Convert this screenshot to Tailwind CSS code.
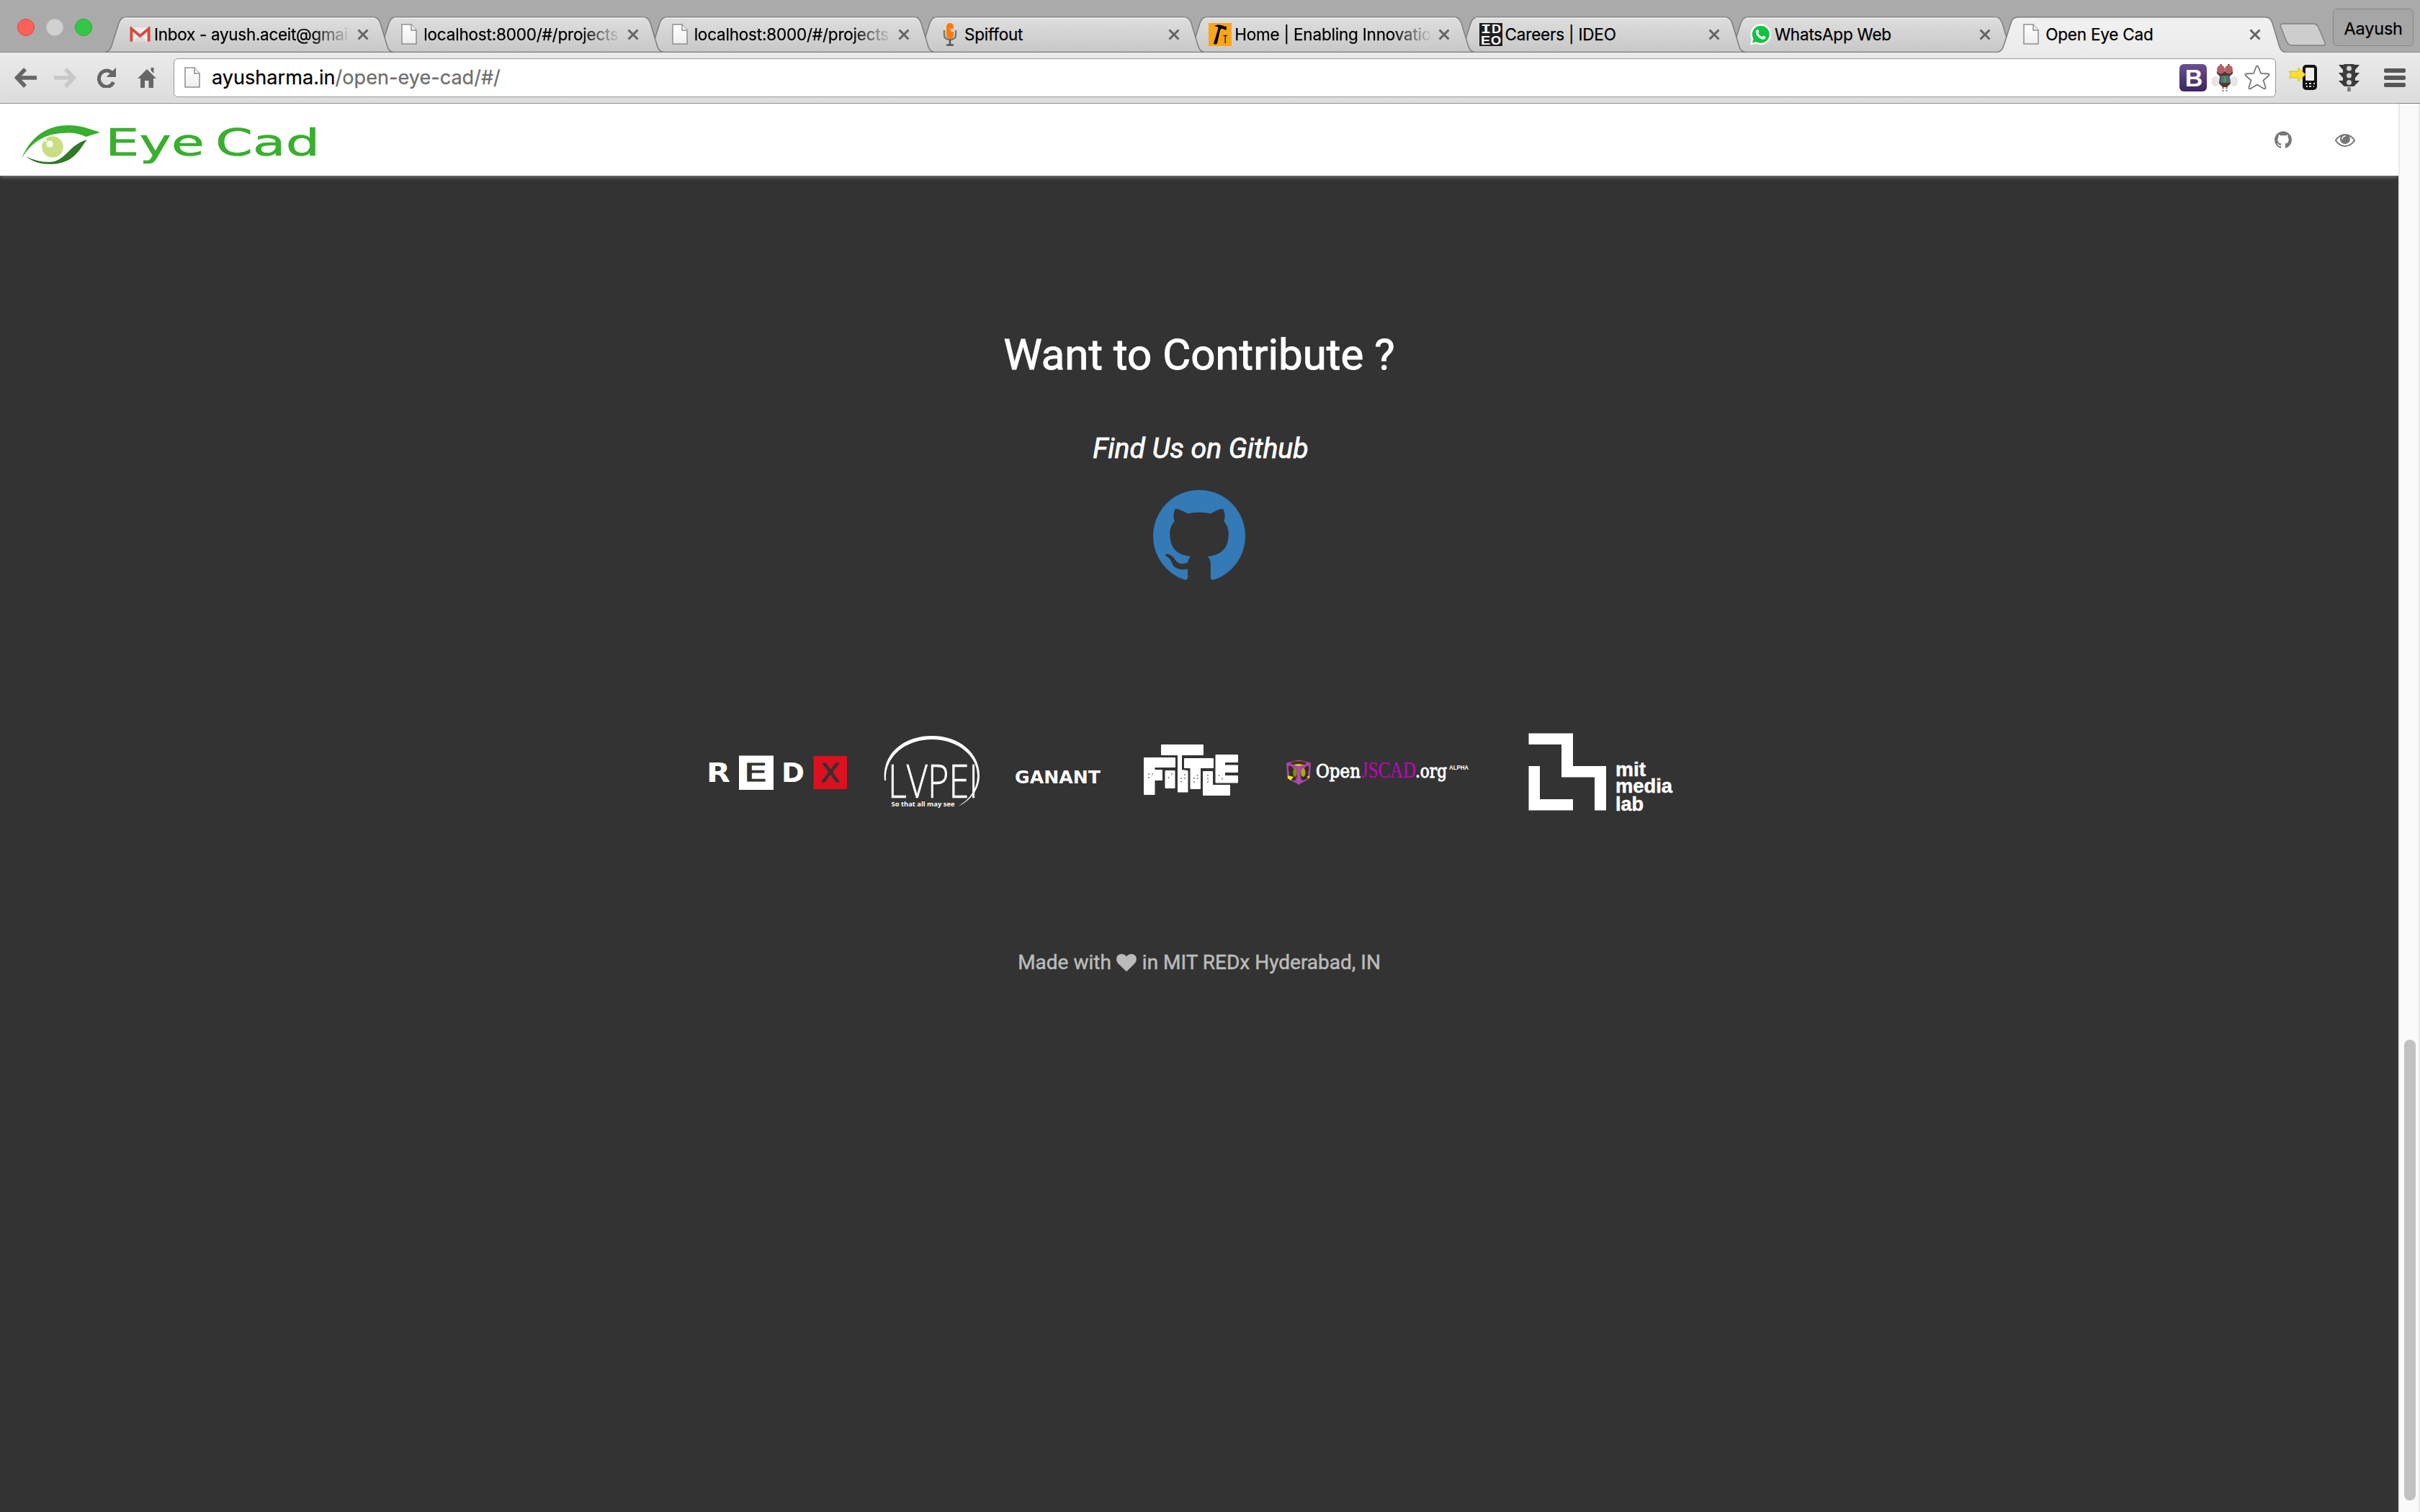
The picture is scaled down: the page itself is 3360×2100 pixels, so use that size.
<!DOCTYPE html>
<html lang="en">
<head>
<meta charset="utf-8">
<title>Open Eye Cad</title>
<script src="https://cdn.jsdelivr.net/npm/@tailwindcss/browser@4"></script>
</head>
<body class="w-[3360px] h-[2100px] overflow-hidden bg-[#333333] flex flex-col font-['Roboto',sans-serif]">

<svg class="absolute size-0">
  <defs>
    <linearGradient id="gTab" x1="0" y1="0" x2="0" y2="1"><stop offset="0" stop-color="#dedede"/><stop offset="1" stop-color="#c8c8c9"/></linearGradient>
    <linearGradient id="gActive" x1="0" y1="0" x2="0" y2="1"><stop offset="0" stop-color="#f1f1f1"/><stop offset="1" stop-color="#ebebeb"/></linearGradient>
    <linearGradient id="gPage" x1="0" y1="0" x2="0" y2="1"><stop offset="0" stop-color="#ffffff"/><stop offset="1" stop-color="#eeeeee"/></linearGradient>
    <linearGradient id="gB" x1="0" y1="0" x2="0" y2="1"><stop offset="0" stop-color="#6b5091"/><stop offset="1" stop-color="#3b2560"/></linearGradient>
  </defs>
  <symbol id="tab" viewBox="0 0 400 50">
    <path d="M0 49.500C6 48 7.500 45 9.500 39L19 9C21.500 2.500 24 .75 30 .75H371C377 .75 379.500 2.500 382 9L391 39C393 45 394 48 400 49.500Z" fill="url(#gTab)" stroke="#7d7d7d" stroke-width="1.500"/>
    <path d="M26 2.250H375" stroke="#eeeeee" stroke-width="1.500"/>
  </symbol>
  <symbol id="tabActive" viewBox="0 0 400 52">
    <path d="M0 52V49.500C6 48 7.500 45 9.500 39L19 9C21.500 2.500 24 .75 30 .75H371C377 .75 379.500 2.500 382 9L391 39C393 45 394 48 400 49.500V52Z" fill="url(#gActive)"/>
    <path d="M0 49.500C6 48 7.500 45 9.500 39L19 9C21.500 2.500 24 .75 30 .75H371C377 .75 379.500 2.500 382 9L391 39C393 45 394 48 400 49.500" fill="none" stroke="#7d7d7d" stroke-width="1.500"/>
  </symbol>
  <symbol id="page" viewBox="0 0 22 30">
    <path d="M1 1H14L21 9V28H1Z" fill="url(#gPage)" stroke="#8e8e8e" stroke-width="1.500"/>
    <path d="M14 1V9H21" fill="#f6f6f6" stroke="#8e8e8e" stroke-width="1.500"/>
  </symbol>
  <symbol id="close" viewBox="0 0 16 16"><path d="M1.500 1.500L14.500 14.500M14.500 1.500L1.500 14.500" stroke="#646464" stroke-width="3"/></symbol>
  <symbol id="github" viewBox="128 128 1536 1500">
    <path d="M896 128q209 0 385.500 103t279.500 279.500 103 385.500q0 251-146.500 451.500t-378.500 277.500q-27 5-40-7t-13-30q0-3 .5-76.500t.5-134.500q0-97-52-142 57-6 102.500-18t94-39 81-66.500 53-105 20.500-150.500q0-119-79-206 37-91-8-204-28-9-81 11t-92 44l-38 24q-93-26-192-26t-192 26q-16-11-42.500-27t-83.500-38.500-85-13.500q-45 113-8 204-79 87-79 206 0 85 20.500 150t52.500 105 80.500 67 94 39 102.500 18q-39 36-49 103-21 10-45 15t-57 5-65.500-21.500-55.500-62.500q-19-32-48.500-52t-49.500-24l-20-3q-21 0-29 4.500t-5 11.500 9 14 13 12l7 5q22 10 43.500 38t31.500 51l10 23q13 38 44 61.500t67 30 69.500 7 55.500-3.500l23-4q0 38 .5 88.500t.5 54.500q0 18-13 30t-40 7q-232-77-378.500-277.500t-146.500-451.500q0-209 103-385.500t279.500-279.500 385.500-103z"/>
  </symbol>
</svg>

<!-- Tab strip -->
<div class="relative flex h-[73px] shrink-0 bg-[#aaaaaa] border-b-[1.5px] border-[#8a8a8a] font-['Inter',sans-serif] text-[22.5px] tracking-[-0.2px] text-black [-webkit-text-stroke:0.25px_black]">
  <div class="flex w-[146px] h-[76px] items-center gap-4 pl-6">
    <span class="size-6 rounded-full bg-[#fd605b] border border-[#e2463f]"></span>
    <span class="size-6 rounded-full bg-[#d1d1d1] border border-[#c4c4c4]"></span>
    <span class="size-6 rounded-full bg-[#33c748] border border-[#1ead34]"></span>
  </div>

  <div class="relative z-8 mt-[23px] w-[400px] h-[50px] shrink-0 flex items-center">
    <svg class="absolute inset-0 w-[400px] h-[50px]"><use href="#tab"/></svg>
    <svg class="relative ml-[34px] w-[29px] h-[22px]" viewBox="0 0 30 22"><path d="M1 1H29V21H1Z" fill="#eeeeee"/><path d="M4 21L15 11L26 21Z" fill="#dcdcdc"/><path d="M2.500 21V2.500L15 13L27.500 2.500V21" fill="none" stroke="#d54b3d" stroke-width="4"/></svg>
    <span class="relative ml-[5px] w-[273px] tracking-[-0.300px] whitespace-nowrap overflow-hidden mask-r-from-80% mask-r-to-100%">Inbox - ayush.aceit@gmai</span>
    <svg class="relative ml-[9px] size-4"><use href="#close"/></svg>
  </div>
  <div class="relative z-7 mt-[23px] -ml-[24.700px] w-[400px] h-[50px] shrink-0 flex items-center">
    <svg class="absolute inset-0 w-[400px] h-[50px]"><use href="#tab"/></svg>
    <svg class="relative ml-9 w-[22px] h-[30px]"><use href="#page"/></svg>
    <span class="relative ml-[9px] w-[274px] whitespace-nowrap overflow-hidden mask-r-from-80% mask-r-to-100%">localhost:8000/#/projects</span>
    <svg class="relative ml-[9px] size-4"><use href="#close"/></svg>
  </div>
  <div class="relative z-6 mt-[23px] -ml-[24.700px] w-[400px] h-[50px] shrink-0 flex items-center">
    <svg class="absolute inset-0 w-[400px] h-[50px]"><use href="#tab"/></svg>
    <svg class="relative ml-9 w-[22px] h-[30px]"><use href="#page"/></svg>
    <span class="relative ml-[9px] w-[274px] whitespace-nowrap overflow-hidden mask-r-from-80% mask-r-to-100%">localhost:8000/#/projects</span>
    <svg class="relative ml-[9px] size-4"><use href="#close"/></svg>
  </div>
  <div class="relative z-5 mt-[23px] -ml-[24.700px] w-[400px] h-[50px] shrink-0 flex items-center">
    <svg class="absolute inset-0 w-[400px] h-[50px]"><use href="#tab"/></svg>
    <svg class="relative ml-[37px] w-[20px] h-8" viewBox="0 0 20 32"><path d="M2 10V16Q2 23 10 23T18 16V10" fill="none" stroke="#777" stroke-width="2.500"/><path d="M10 23V30M5 30.500H15" stroke="#555" stroke-width="2.500"/><rect x="5" y="0" width="10" height="22" rx="5" fill="#ff7a0a"/><path d="M10 8H15V12H12Z" fill="#d9d2cc"/></svg>
    <span class="relative ml-[10px] w-[274px] whitespace-nowrap">Spiffout</span>
    <svg class="relative ml-[9px] size-4"><use href="#close"/></svg>
  </div>
  <div class="relative z-4 mt-[23px] -ml-[24.700px] w-[400px] h-[50px] shrink-0 flex items-center">
    <svg class="absolute inset-0 w-[400px] h-[50px]"><use href="#tab"/></svg>
    <svg class="relative ml-[31px] size-8" viewBox="0 0 32 32"><rect width="32" height="32" fill="#faa51a"/><path d="M8 4C12 1.500 18 2 23 5L25 4.500L24.500 10L22 9L18 7.500L16 10L12 28Q10 31 7 28.500L13 9L13.500 5.500Z" fill="#000"/><path d="M20.500 17.500H26M23.300 17.500V28" stroke="#222" stroke-width="1.500"/></svg>
    <span class="relative ml-[4px] w-[274px] whitespace-nowrap overflow-hidden mask-r-from-80% mask-r-to-100%">Home | Enabling Innovation</span>
    <svg class="relative ml-[9px] size-4"><use href="#close"/></svg>
  </div>
  <div class="relative z-3 mt-[23px] -ml-[24.700px] w-[400px] h-[50px] shrink-0 flex items-center">
    <svg class="absolute inset-0 w-[400px] h-[50px]"><use href="#tab"/></svg>
    <svg class="relative ml-[31px] size-8" viewBox="0 0 32 32"><rect width="32" height="32" fill="#231f20"/><g fill="#fff" font-family="Liberation Sans" font-weight="bold" font-size="16"><text x="2" y="14" font-family="Liberation Mono" textLength="14" lengthAdjust="spacingAndGlyphs" font-size="18">I</text><text x="17" y="14" textLength="13" lengthAdjust="spacingAndGlyphs">D</text><text x="2" y="29.500" textLength="13" lengthAdjust="spacingAndGlyphs">E</text><text x="16" y="29.500" textLength="14" lengthAdjust="spacingAndGlyphs">O</text></g></svg>
    <span class="relative ml-[4px] w-[274px] whitespace-nowrap">Careers | IDEO</span>
    <svg class="relative ml-[8px] size-4"><use href="#close"/></svg>
  </div>
  <div class="relative z-2 mt-[23px] -ml-[24.700px] w-[400px] h-[50px] shrink-0 flex items-center">
    <svg class="absolute inset-0 w-[400px] h-[50px]"><use href="#tab"/></svg>
    <svg class="relative ml-[31px] size-[30px]" viewBox="0 0 30 30"><path d="M1 29.500L3 21.500A14.500 14.500 0 1 1 9 27.500Z" fill="#fff"/><path d="M4 26.500L5.500 21A12 12 0 1 1 9.500 25Z" fill="#12c243"/><path d="M10 8.500C11 7.500 12 7.800 12.500 9L13.300 11C13.500 12 12 12.500 12.300 13.300C13.500 15.500 15 17 17.300 17.900C18.200 18 18.700 16.500 19.500 16.800L22 18C22.800 18.500 22.300 20 21.500 20.800C18.500 23 14.500 20.500 12.300 18.200C9.500 15.300 7.500 11.500 10 8.500Z" fill="#fff"/></svg>
    <span class="relative ml-[5px] w-[275px] whitespace-nowrap">WhatsApp Web</span>
    <svg class="relative ml-[9px] size-4"><use href="#close"/></svg>
  </div>
  <div class="relative z-10 mt-[23px] -ml-[24.700px] w-[400px] h-[50px] shrink-0 flex items-center">
    <svg class="absolute inset-0 w-[400px] h-[52px]"><use href="#tabActive"/></svg>
    <svg class="relative ml-9 w-[22px] h-[30px]"><use href="#page"/></svg>
    <span class="relative ml-[9px] w-[274px] whitespace-nowrap">Open Eye Cad</span>
    <svg class="relative ml-[9px] size-4"><use href="#close"/></svg>
  </div>
  <svg class="-ml-2 mt-8 w-[65px] h-8 shrink-0" viewBox="0 0 65 32"><path d="M5 1H46Q52 1 54 6L63 27Q64.500 31 60 31H18Q12 31 9.500 25L1.500 5Q.5 1 5 1Z" fill="#cdcdcd" stroke="#808080" stroke-width="1.500"/></svg>
  <div class="ml-[9px] mt-3 w-[112px] h-[52px] shrink-0 rounded-md border-[1.5px] border-[#858585] bg-[#a6a6a6] flex items-center justify-center text-[23.500px] pt-[3px]">Aayush</div>
</div>

<!-- Toolbar -->
<div class="flex items-center h-[71px] shrink-0 bg-linear-to-b from-[#ebebeb] to-[#dcdcdc] border-b-[1.5px] border-[#7e7e7e] pb-[1px]">
  <svg class="ml-5 w-[31px] h-7" viewBox="0 0 31 28"><path d="M15 2L3.500 14L15 26M4 14H31" fill="none" stroke="#666" stroke-width="5.500"/></svg>
  <svg class="ml-6 w-[31px] h-7" viewBox="0 0 31 28"><path d="M16 2L27.500 14L16 26M27 14H0" fill="none" stroke="#c8c8c8" stroke-width="5.500"/></svg>
  <svg class="ml-[27px] w-[28px] h-7" viewBox="0 0 28 28"><path d="M22 7A10.500 11.200 0 1 0 24.500 20" fill="none" stroke="#666" stroke-width="5"/><path d="M28 0V13H14.500Z" fill="#666"/></svg>
  <svg class="ml-[30px] w-[26px] h-7" viewBox="0 0 26 28"><path d="M13 2L26 15H22V28H15.500V18H10V28H4V15H0ZM18.500 0H22.500V8L18.500 4Z" fill="#666"/></svg>
  <div class="ml-6 w-[2919px] h-[54px] shrink-0 rounded-md border-[1.5px] border-[#999999] bg-white flex items-center pl-[14px] font-['Inter',sans-serif]">
    <svg class="w-[22px] h-[30px]"><use href="#page"/></svg>
    <div class="ml-[16px] mt-[1px] text-[27px] tracking-[0.05px] whitespace-nowrap text-[#6e6e6e] [-webkit-text-stroke:0.25px]"><span class="text-black">ayusharma.in</span>/open-eye-cad/#/</div>
    <svg class="ml-auto size-[38px]" viewBox="0 0 38 38"><rect width="38" height="38" rx="6" fill="url(#gB)"/><text x="20" y="30.500" text-anchor="middle" font-family="Liberation Sans" font-weight="bold" font-size="34" fill="#fff">B</text></svg>
    <svg class="ml-[6px] w-[38px] h-[38px]" viewBox="0 0 38 38"><ellipse cx="6" cy="24" rx="5.500" ry="7" fill="#e6e6e6"/><ellipse cx="32" cy="24" rx="5.500" ry="7" fill="#e6e6e6"/><path d="M13 0L16 5M25 0L22 5" stroke="#5a3a2a" stroke-width="2"/><path d="M8 10H30V13L26 17L27 27L22 32H16L11 27L12 17L8 13Z" fill="#54392a"/><ellipse cx="13.500" cy="7.500" rx="5.500" ry="6" fill="#b8606a"/><ellipse cx="24.500" cy="7.500" rx="5.500" ry="6" fill="#b8606a"/><path d="M13 16H26V26H13Z" fill="#4e6f86"/><path d="M18 17H21V26H17Z" fill="#4f9a55"/><path d="M16.500 32V38M21.500 32V38" stroke="#8a7060" stroke-width="2" stroke-dasharray="2.500 1.500"/></svg>
    <svg class="ml-2 mr-[7px] w-[36px] h-[35px]" viewBox="0 0 36 35"><path d="M18 1.500Q19 1.500 20 4L23 12L33 12.500Q36 13 33.500 15.500L26.500 21.500L29.500 31Q30 34.500 27 33L18 27.500L9 33Q6 34.500 6.500 31L9.500 21.500L2.500 15.500Q0 13 3 12.500L13 12L16 4Q17 1.500 18 1.500Z" fill="#fff" stroke="#777" stroke-width="1.800"/></svg>
  </div>
  <svg class="ml-[18px] w-[39px] h-[35px]" viewBox="0 0 39 35"><rect x="19" y="0" width="20" height="35" rx="5" fill="#111"/><rect x="23" y="4" width="12" height="18" rx="1" fill="#eee"/><path d="M23 26H25M28 26H31M34 26H36M24 30H26M28 30H31M34 30H35" stroke="#ddd" stroke-width="2"/><path d="M0 9H13V4L23 13.500L13 23V18H0L3 13.500Z" fill="#fbe02c" stroke="#cbb11c" stroke-width=".8"/></svg>
  <svg class="ml-[30px] w-[29px] h-[38px]" viewBox="0 0 29 38"><path d="M0 1H29L23 8H6ZM0 12H29L23 19H6ZM0 23H29L23 29H6Z" fill="#333"/><rect x="6" y="0" width="17" height="31" rx="3" fill="#3c3c3c"/><circle cx="14.500" cy="6" r="3.500" fill="#d2d2d2"/><circle cx="14.500" cy="16" r="3.500" fill="#d2d2d2"/><circle cx="14.500" cy="25.500" r="3.500" fill="#d2d2d2"/><path d="M14.500 32V38" stroke="#777" stroke-width="4.500"/></svg>
  <div class="ml-[34px] flex flex-col gap-1"><span class="w-[30px] h-1.5 rounded-xs bg-[#575757]"></span><span class="w-[30px] h-1.5 rounded-xs bg-[#575757]"></span><span class="w-[30px] h-1.5 rounded-xs bg-[#575757]"></span></div>
</div>

<!-- Viewport -->
<div class="flex flex-1 min-h-0">
  <div class="w-[3330px] flex flex-col">
    <header class="h-[100px] shrink-0 bg-white flex items-center shadow-[0_1px_6px_rgba(255,255,255,0.45)]">
      <svg class="ml-7 mt-4 w-[420px] h-[64px]" viewBox="28 170 420 64">
        <path d="M30 220C42 192 62 174 96 174C110 174 122 178 139 184L119 190C108 184 96 184 85 185C60 187 44 198 30 220Z" fill="#3aae2f"/>
        <path d="M35 217C48 223 64 227 76 224C94 218 98 200 121 194C112 204 104 228 70 228C56 228 46 225 35 217Z" fill="#317a28"/>
        <circle cx="73" cy="204" r="14.800" fill="#c9dd82"/><circle cx="69" cy="200" r="4.800" fill="#f7f9ec"/><circle cx="63" cy="195" r="2" fill="#f7f9ec"/>
        <g font-family="DejaVu Sans" fill="#3aae2f" stroke="#3aae2f" stroke-width=".6">
          <text x="146" y="215.500" font-size="51" textLength="138" lengthAdjust="spacingAndGlyphs">Eye</text>
          <text x="299" y="215.500" font-size="51" textLength="145" lengthAdjust="spacingAndGlyphs">Cad</text>
        </g>
      </svg>
      <svg class="ml-auto w-[24px] h-[24px] fill-[#777777]"><use href="#github"/></svg>
      <svg class="ml-[60px] mr-[60px] mt-0.5 w-[28px] h-[18px] fill-[#777777]" viewBox="0 384 1792 1152"><path d="M1664 960q-152-236-381-353 61 104 61 225 0 185-131.500 316.500t-316.500 131.500-316.500-131.500-131.500-316.500q0-121 61-225-229 117-381 353 133 205 333.500 326.500t434.500 121.500 434.500-121.500 333.500-326.500zm-720-384q0-20-14-34t-34-14q-125 0-214.500 89.500t-89.500 214.500q0 20 14 34t34 14 34-14 14-34q0-86 61-147t147-61q20 0 34-14t14-34zm848 384q0 34-20 69-140 230-376.500 368.500t-499.500 138.500-499.500-139-376.500-368q-20-35-20-69t20-69q140-229 376.500-368t499.500-139 499.500 139 376.500 368q20 35 20 69z"/></svg>
    </header>

    <main class="flex flex-col items-center text-white">
      <h2 class="mt-[216px] text-[60px] leading-[66px] [-webkit-text-stroke:1px_white]">Want to Contribute ?</h2>
      <h3 class="mt-[75px] pl-[4px] text-[39.200px] leading-[44px] italic [-webkit-text-stroke:0.8px_white]">Find Us on Github</h3>
      <svg class="mt-[35px] w-[128px] h-[126px] fill-[#337ab7]"><use href="#github"/></svg>

      <div class="mt-[212px] w-full pl-[984px] h-[108px] flex">
        <svg class="w-[192px] h-[108px]" viewBox="984 1018 192 108" font-family="DejaVu Sans" font-weight="bold">
          <text x="981" y="1086" font-size="37" textLength="33" lengthAdjust="spacingAndGlyphs" fill="#fff">R</text>
          <path d="M1026 1049.500H1074V1097H1026Z" fill="#fff"/>
          <text x="1033" y="1085" font-size="33" font-weight="normal" textLength="32" lengthAdjust="spacingAndGlyphs" fill="#333" stroke="#333">E</text>
          <text x="1085" y="1086" font-size="37" textLength="32" lengthAdjust="spacingAndGlyphs" fill="#fff">D</text>
          <path d="M1129.500 1050H1176V1096H1129.500Z" fill="#dc101e"/>
          <text x="1139" y="1086" font-size="35" font-weight="normal" textLength="27" lengthAdjust="spacingAndGlyphs" fill="#333" stroke="#333">X</text>
        </svg>
        <svg class="ml-[50px] w-[136px] h-[108px] overflow-visible" viewBox="1226 1018 136 108">
          <path d="M1228 1084C1224 1048 1254 1022 1294 1022C1332 1022 1360 1046 1360 1077C1360 1096 1348 1112 1330 1120C1346 1111 1357 1096 1357 1077C1357 1050 1330 1027 1294 1027C1258 1027 1228 1050 1230 1084Z" fill="#fff"/>
          <text x="1233" y="1108" font-family="Open Sans" font-weight="300" font-size="65" textLength="125" lengthAdjust="spacingAndGlyphs" fill="#fff" stroke="#fff" stroke-width=".6">LVPEI</text>
          <text x="1237.500" y="1120" font-family="Open Sans" font-weight="bold" font-size="9.500" textLength="88" lengthAdjust="spacingAndGlyphs" fill="#fff">So that all may see</text>
        </svg>
        <svg class="ml-[47px] w-[122px] h-[108px]" viewBox="1409 1018 122 108"><text x="1409" y="1088" font-family="DejaVu Sans" font-weight="bold" font-size="24.500" textLength="119" lengthAdjust="spacingAndGlyphs" fill="#fff">GANANT</text></svg>
        <svg class="ml-[55px] w-[136px] h-[108px]" viewBox="1586 1018 136 108">
          <g fill="#fff" stroke="#fff" stroke-width="2" stroke-linejoin="round">
            <path d="M1589 1053H1631V1065H1602.500V1070H1613V1083H1602.500V1103H1589Z"/>
            <path d="M1618.500 1071H1630.500V1094H1618.500Z"/>
            <path d="M1613 1035H1670V1048H1640V1070L1648.500 1071V1099.500H1636V1048H1613Z"/>
            <path d="M1645 1054H1684V1066H1666V1095H1653.500V1066H1645Z"/>
            <path d="M1671 1072H1683V1091H1707V1104H1671Z"/>
            <path d="M1688.500 1049H1718V1058H1700V1063.500H1718V1072H1700V1078H1718V1086.500H1688.500Z"/>
          </g>
          <g fill="#777"><circle cx="1595" cy="1075" r="1"/><circle cx="1600" cy="1075" r="1"/><circle cx="1595" cy="1080" r="1"/><circle cx="1627" cy="1075" r="1"/><circle cx="1622.500" cy="1080" r="1"/><circle cx="1645" cy="1076" r="1"/><circle cx="1645" cy="1081" r="1"/><circle cx="1640" cy="1081" r="1"/><circle cx="1640" cy="1085.500" r="1"/><circle cx="1662.500" cy="1077" r="1"/><circle cx="1662.500" cy="1081" r="1"/><circle cx="1658" cy="1081" r="1"/><circle cx="1658" cy="1086" r="1"/><circle cx="1677" cy="1077" r="1"/><circle cx="1677" cy="1081.500" r="1"/><circle cx="1677" cy="1086" r="1"/><circle cx="1692.500" cy="1077" r="1"/><circle cx="1697" cy="1081.500" r="1"/></g>
        </svg>
        <svg class="ml-[62px] w-[258px] h-[108px]" viewBox="1784 1018 258 108">
          <path d="M1786 1059.500L1803.300 1055.300L1820 1059.500L1818.700 1081L1803.300 1089.700L1787.300 1081Z" fill="#a845ab"/>
          <ellipse cx="1803" cy="1060" rx="11" ry="3" fill="#4b3410"/><path d="M1796 1062.500Q1803 1060 1810 1062.500L1803 1064Z" fill="#e6d820"/>
          <path d="M1789 1064Q1793 1063 1796 1068Q1801 1068 1801 1074Q1801 1080 1798 1084Q1793 1084 1789 1079Q1791 1074 1789 1070Z" fill="#332d1d"/>
          <path d="M1817 1064Q1813 1063 1811 1068Q1805.500 1068 1805.500 1074Q1805.500 1080 1808 1084Q1814 1083 1817 1079Q1815 1074 1817 1070Z" fill="#332d1d"/>
          <ellipse cx="1798" cy="1073" rx="2.800" ry="6" fill="#8a880c"/><ellipse cx="1809.300" cy="1073" rx="3.300" ry="6" fill="#aaa714"/>
          <path d="M1788 1077L1796 1079L1792 1084L1788 1081Z" fill="#ece41a"/><path d="M1814 1079L1818.500 1077L1817.500 1081Z" fill="#ece41a"/>
          <path d="M1803.300 1064.500V1089.500" stroke="#b04db3" stroke-width="2"/>
          <text x="1827" y="1080" font-family="DejaVu Serif" font-size="26" textLength="62" lengthAdjust="spacingAndGlyphs" fill="#fff" stroke="#fff" stroke-width="1">Open</text>
          <text x="1890" y="1080" font-family="Liberation Serif" font-size="31" textLength="76" lengthAdjust="spacingAndGlyphs" fill="#c800c8">JSCAD</text>
          <text x="1965" y="1080" font-family="DejaVu Serif" font-size="26" textLength="44" lengthAdjust="spacingAndGlyphs" fill="#fff" stroke="#fff" stroke-width="1">.org</text>
          <text x="2012" y="1068.500" font-family="Liberation Sans" font-weight="bold" font-size="9.500" textLength="27" lengthAdjust="spacingAndGlyphs" fill="#fff">ALPHA</text>
        </svg>
        <svg class="ml-[80px] w-[202px] h-[110px]" viewBox="2122 1018 202 110">
          <path d="M2122.500 1018.500H2184V1064H2230V1125.500H2214V1079.500H2168V1034H2122.500ZM2122.500 1064H2138V1110H2184V1125.500H2122.500Z" fill="#fff"/>
          <g font-family="Liberation Sans" font-weight="bold" font-size="27.500" fill="#fff" stroke="#fff" stroke-width=".5">
            <text x="2243" y="1078" textLength="42" lengthAdjust="spacingAndGlyphs">mit</text>
            <text x="2243" y="1101" textLength="79" lengthAdjust="spacingAndGlyphs">media</text>
            <text x="2243" y="1125.500" textLength="39" lengthAdjust="spacingAndGlyphs">lab</text>
          </g>
        </svg>
      </div>

      <div class="mt-[191px] flex items-center text-[28px] leading-10 text-[#bbbbbb] whitespace-nowrap [-webkit-text-stroke:0.5px_#bbbbbb]">
        <span>Made with</span>
        <svg class="mx-[7.500px] w-[28px] h-[24px] fill-[#bbbbbb]" viewBox="0 128 1792 1536"><path stroke="none" d="M896 1664q-26 0-44-18l-624-602q-10-8-27.500-26t-55.500-65.500-68-97.500-53.500-121-23.500-138q0-220 127-344t351-124q62 0 126.500 21.500t120 58 95.500 68.500 76 68q36-36 76-68t95.500-68.500 120-58 126.500-21.500q224 0 351 124t127 344q0 221-229 450l-623 600q-18 18-44 18z"/></svg>
        <span>in MIT REDx Hyderabad, IN</span>
      </div>
    </main>
  </div>
  <div class="w-[30px] bg-[#fafafa] border-x-2 border-[#e8e8e8] pt-[1300px] pl-[6px]">
    <div class="w-4 h-[640px] rounded-full bg-[#c1c1c1]"></div>
  </div>
</div>
</body>
</html>
